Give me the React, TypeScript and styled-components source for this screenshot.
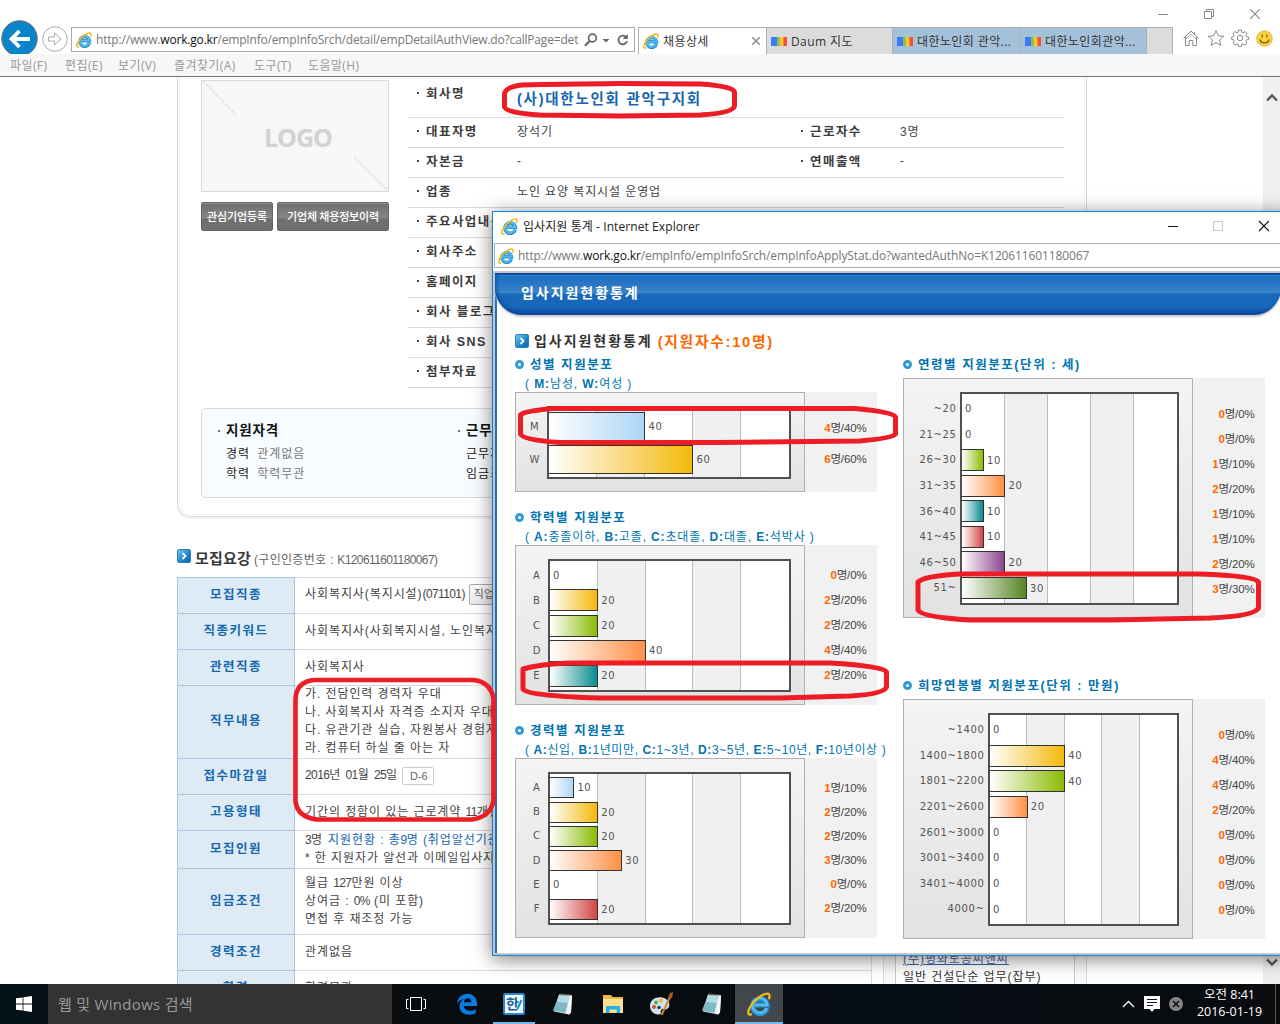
import React from "react";
import styled, { createGlobalStyle } from "styled-components";

const GlobalStyle = createGlobalStyle`
  * { box-sizing: border-box; }
  body { margin: 0; background: #fff; overflow: hidden; }
  svg { display: block; flex: none; }
`;

const PAGE_FONT = `"Liberation Sans", "Noto Sans CJK KR", sans-serif`;
const UI_FONT = `"Open Sans", "Noto Sans CJK KR", sans-serif`;
const CHART_FONT = `"DejaVu Sans", sans-serif`;

const Screen = styled.div`
  position: relative;
  width: 1280px;
  height: 1024px;
  overflow: hidden;
  display: flex;
  flex-direction: column;
  background: #fff;
  font-family: ${PAGE_FONT};
  white-space: nowrap;
`;

/* ---------- browser frame ---------- */
const TitleStrip = styled.div`
  height: 20px;
  display: flex;
  justify-content: flex-end;
  align-items: center;
  gap: 36px;
  padding: 8px 20px 0 0;
`;
const NavRow = styled.div`
  height: 34px;
  display: flex;
  align-items: flex-start;
  overflow: hidden;
`;
const NavButtons = styled.div`
  width: 71px;
  height: 34px;
  overflow: hidden;
`;
const AddressBox = styled.div`
  width: 564px;
  height: 25px;
  margin: 7px 3px 0 0;
  border: 1px solid #a9a9a9;
  display: flex;
  align-items: center;
  padding: 0 5px 0 4px;
`;
const Url = styled.div<{ $size: number; $ls: number }>`
  flex: 1;
  min-width: 0;
  margin-left: 4px;
  font: ${(p) => p.$size}px ${UI_FONT};
  letter-spacing: ${(p) => p.$ls}px;
  color: #777;
  b { font-weight: 400; color: #111; }
`;
const Tab = styled.div<{ $w: number; $bg: string; $last?: boolean }>`
  width: ${(p) => p.$w}px;
  height: 27px;
  margin-top: 7px;
  border: 1px solid #b0b0b0;
  border-right-width: ${(p) => (p.$last ? 1 : 0)}px;
  border-bottom-width: 0;
  background: ${(p) => p.$bg};
  display: flex;
  align-items: center;
  padding: 0 6px 0 4px;
  gap: 4px;
  font: 12px ${UI_FONT};
  letter-spacing: 0.4px;
  color: #333;
`;
const TabTitle = styled.span`
  flex: 1;
  letter-spacing: 0.4px;
`;
const BrowserTools = styled.div`
  display: flex;
  align-items: center;
  gap: 6.5px;
  padding: 9px 0 0 9px;
`;
const MenuBar = styled.div`
  height: 23px;
  background: #f7f7f7;
  border-bottom: 1px solid #747474;
  display: flex;
  align-items: center;
  padding-left: 10px;
  font: 12px ${UI_FONT};
  color: #999;
`;
const MenuItem = styled.span<{ $w: number }>`
  width: ${(p) => p.$w}px;
  letter-spacing: 0.4px;
`;

/* ---------- page ---------- */
const Viewport = styled.div`
  height: 907px;
  display: flex;
  overflow: hidden;
`;
const PageArea = styled.div`
  flex: 1;
  padding-left: 177px;
`;
const ScrollBar = styled.div`
  width: 17px;
  background: #f0f0f0;
  display: flex;
  flex-direction: column;
  justify-content: space-between;
  align-items: center;
  padding: 16px 0 17px;
`;
const CompanyCard = styled.section`
  width: 910px;
  height: 440px;
  border: 1px solid #dadada;
  border-top: 0;
  border-radius: 0 0 13px 13px;
  box-shadow: inset 0 0 0 1px #fff, inset 0 0 0 2px #f4f4f4, 0 2px 1px #f3f3f3;
  padding: 0 22px 0 23px;
`;
const CardTop = styled.div`
  display: flex;
  height: 331px;
`;
const LogoColumn = styled.div`
  width: 188px;
  padding-top: 3px;
  margin-right: 19px;
`;
const LogoBox = styled.div`
  position: relative;
  height: 112px;
  border: 1px solid #dadada;
  background: #f7f7f7;
  display: flex;
  align-items: center;
  justify-content: center;
  padding: 1px 0 0 6px;
  color: #d2d2d2;
  font: 700 25px "Open Sans", sans-serif;
  letter-spacing: -1px;
  svg { position: absolute; left: 0; top: 0; }
`;
const ButtonRow = styled.div`
  display: flex;
  justify-content: space-between;
  margin-top: 10px;
`;
const DarkButton = styled.div<{ $w: number }>`
  width: ${(p) => p.$w}px;
  height: 29px;
  border: 1px solid #656565;
  border-radius: 2px;
  background: linear-gradient(#6e6e6e, #868686 55%, #707070 58%, #707070);
  box-shadow: inset 0 1px 0 #909090;
  color: #fff;
  font: 500 11px/26px "Noto Sans CJK KR", sans-serif;
  letter-spacing: -0.15px;
  text-align: center;
`;
const InfoTable = styled.div`
  width: 656px;
`;
const InfoRow = styled.div<{ $h?: number }>`
  height: ${(p) => p.$h ?? 30}px;
  border-bottom: 1px solid #dadada;
  display: grid;
  grid-template-columns: 109px 283px 100px 1fr;
  align-items: center;
  padding-bottom: ${(p) => (p.$h ? 9 : 4)}px;
  color: #444;
  font-size: 12px;
  letter-spacing: 0.9px;
`;
const Label = styled.span<{ $inset?: number }>`
  display: flex;
  align-items: center;
  gap: 7px;
  padding-left: ${(p) => p.$inset ?? 9}px;
  font-weight: 700;
  font-size: 12.5px;
  letter-spacing: 1.45px;
  color: #3c3c3c;
  &::before { content: ""; width: 2px; height: 2px; background: #444; }
`;
const CompanyName = styled.span`
  font-weight: 700;
  font-size: 14.5px;
  letter-spacing: 1.75px;
  color: #1565b0;
  padding-top: 9px;
`;
const SummaryBox = styled.div`
  width: 863px;
  height: 90px;
  border: 1px solid #d9d9d9;
  border-radius: 5px;
  background: #f8fcff;
  display: flex;
  padding: 11px 0 0 16px;
`;
const SummaryCol = styled.div`
  width: 240px;
  font-size: 12px;
  line-height: 20px;
  letter-spacing: 0.96px;
  color: #777;
  p { margin: 0; padding-left: 8px; }
  b { font-weight: 400; color: #222; margin-right: 3px; }
`;
const SummaryTitle = styled.div`
  display: flex;
  align-items: center;
  gap: 6px;
  height: 22px;
  margin-bottom: 2px;
  color: #111;
  font-weight: 700;
  font-size: 13.5px;
  letter-spacing: 0.8px;
  &::before { content: ""; width: 2px; height: 2px; background: #777; }
`;
const SectionTitle = styled.div`
  display: flex;
  align-items: center;
  height: 24px;
  margin: 29px 0 7px;
  font-size: 12px;
  color: #666;
  letter-spacing: 0.3px;
  svg { margin-bottom: 4px; }
  h2 {
    margin: 0 3px 2px 4px;
    font-size: 15px;
    letter-spacing: 0.2px;
    color: #3a3a3a;
  }
`;
const Num = styled.span`
  letter-spacing: -0.6px;
`;
const Columns = styled.div`
  display: flex;
`;
const JobTable = styled.div`
  width: 695px;
  border-right: 1px solid #ddd;
`;
const JobRow = styled.div<{ $h: number }>`
  height: ${(p) => p.$h}px;
  display: flex;
`;
const JobHead = styled.div`
  width: 118px;
  background: #deeaf4;
  border: 1px solid #abc3e2;
  border-bottom: 0;
  display: flex;
  align-items: center;
  justify-content: center;
  padding-bottom: 5px;
  color: #1467b3;
  font-weight: 700;
  font-size: 12.5px;
  letter-spacing: 1.45px;
`;
const JobValue = styled.div`
  flex: 1;
  border-top: 1px solid #dadada;
  padding: 0 0 2px 10px;
  display: flex;
  flex-direction: column;
  justify-content: center;
  color: #444;
  font-size: 12px;
  line-height: 18px;
  letter-spacing: 0.92px;
  em { font-style: normal; color: #1467b3; margin-left: 5px; }
`;
const SmallTag = styled.span<{ $w: number }>`
  display: inline-block;
  vertical-align: middle;
  width: ${(p) => p.$w}px;
  height: ${(p) => (p.$w > 40 ? 21 : 18)}px;
  margin-left: 4px;
  border: 1px solid ${(p) => (p.$w > 40 ? "#aaa" : "#ccc")};
  border-radius: 2px;
  background: linear-gradient(#fff, ${(p) => (p.$w > 40 ? "#e9e9e9" : "#fff")});
  padding-left: ${(p) => (p.$w > 40 ? 4 : 7)}px;
  font-size: 11px;
  line-height: ${(p) => (p.$w > 40 ? 19 : 16)}px;
  letter-spacing: 0;
  color: #666;
`;
const SidePanel = styled.aside`
  width: 204px;
  height: 430px;
  margin-left: 11px;
  border: 1px solid #ddd;
  border-top: 0;
  background: #fafafa;
  padding: 0 11px;
`;
const SideList = styled.div`
  height: 430px;
  border: 1px solid #ccc;
  border-top: 0;
  background: #fff;
  display: flex;
  flex-direction: column;
  justify-content: flex-end;
  padding: 0 0 20px 7px;
  font-size: 12px;
  line-height: 18px;
  letter-spacing: 0.95px;
  color: #333;
  a { color: #3d5fa8; text-decoration: underline; }
`;

/* ---------- popup window ---------- */
const Popup = styled.div`
  position: absolute;
  left: 492px;
  top: 211px;
  width: 800px;
  height: 745px;
  border: 1px solid #1a80cf;
  background: #fff;
  box-shadow: 0 3px 18px rgba(0, 0, 0, 0.5);
  display: flex;
  flex-direction: column;
`;
const PopupTitle = styled.div`
  height: 31px;
  display: flex;
  align-items: center;
  padding: 0 22px 3px 8px;
  gap: 5px;
  font: 12px ${UI_FONT};
  letter-spacing: 0.08px;
  color: #222;
  span { flex: 1; }
`;
const PopupAddress = styled.div`
  height: 25px;
  margin-left: 1px;
  border: 1px solid #b0b0b0;
  display: flex;
  align-items: center;
  padding-left: 3px;
`;
const PopupBody = styled.div`
  flex: 1;
  margin-top: 3px;
  border: solid #c4c4c4;
  border-width: 2px 0 2px 2px;
`;
const PopupPage = styled.div`
  height: 100%;
  border-left: 2px solid #2070bc;
`;
const BannerBack = styled.div`
  height: 44px;
  margin-left: -2px;
`;
const Banner = styled.div`
  width: 786px;
  height: 42px;
  padding: 0 0 2px 26px;
  border-radius: 0 0 27px 27px;
  background: linear-gradient(#0a3f96 0, #0a3f96 1px, #2a78c4 2px, #1d6fc0 4px, #3a83ca 20px, #1868ba 21px, #1868ba 34px, #0d479f 42px);
  box-shadow: 0 2px 2px #ccc, inset 2px -2px 4px -1px #0d479f;
  color: #fff;
  font-weight: 700;
  font-size: 14px;
  line-height: 41px;
  letter-spacing: 1.95px;
`;
const StatHeading = styled.h1`
  display: flex;
  align-items: center;
  height: 28px;
  margin: 9px 0 0 18px;
  font-size: 14px;
  letter-spacing: 1.95px;
  color: #333;
  svg { margin: 2px 5px 0 0; }
  em { font-style: normal; color: #ff6600; margin-left: 5px; letter-spacing: 1.7px; font-size: 14.8px; }
`;
const ChartColumns = styled.div`
  display: flex;
  padding-left: 18px;
  gap: 26px;
`;
const ChartColumn = styled.div`
  width: 362px;
`;
const ChartSection = styled.section<{ $mb: number }>`
  margin-bottom: ${(p) => p.$mb}px;
`;
const ChartTitle = styled.h3`
  display: flex;
  align-items: center;
  gap: 6px;
  height: 19px;
  margin: 0;
  font-size: 12.5px;
  letter-spacing: 1.55px;
  color: #0073b0;
`;
const Bullet = styled.i`
  width: 9px;
  height: 9px;
  border: 3px solid #3399d2;
  border-radius: 50%;
  margin-top: 2px;
`;
const Legend = styled.div<{ $ls?: number }>`
  height: 19px;
  padding-left: 10px;
  color: #0073b0;
  font-size: 12px;
  line-height: 22px;
  letter-spacing: ${(p) => p.$ls ?? 0.6}px;
`;
const ChartFrame = styled.div<{ $h: number }>`
  height: ${(p) => p.$h}px;
  margin-top: ${(p) => (p.$h === 240 ? 5 : 0)}px;
  display: flex;
  background: #f1f1f1;
`;
const Graph = styled.div`
  width: 290px;
  border: 1px solid #b0b0b0;
  background: linear-gradient(#f4f4f4, #e2e2e2);
  display: flex;
  justify-content: flex-end;
  padding: 13px 13px 12px 0;
  font: 10px ${CHART_FONT};
  letter-spacing: 0.62px;
  color: #555;
`;
const AxisLabels = styled.div<{ $wide?: boolean }>`
  display: flex;
  flex-direction: column;
  justify-content: center;
  text-align: ${(p) => (p.$wide ? "right" : "center")};
  padding: 0 ${(p) => (p.$wide ? 3.5 : 7)}px 0 0;
`;
const AxisLabel = styled.span<{ $h: number }>`
  height: ${(p) => p.$h}px;
  line-height: ${(p) => p.$h}px;
`;
const Plot = styled.div<{ $w: number }>`
  width: ${(p) => p.$w}px;
  border: 2px solid #505050;
  display: flex;
  flex-direction: column;
  justify-content: center;
  background: linear-gradient(90deg,
    #fff calc(20% - 1px), #bbb calc(20% - 1px), #bbb 20%,
    #f0f0f0 20%, #f0f0f0 calc(40% - 1px), #bbb calc(40% - 1px), #bbb 40%,
    #fff 40%, #fff calc(60% - 1px), #bbb calc(60% - 1px), #bbb 60%,
    #f0f0f0 60%, #f0f0f0 calc(80% - 1px), #bbb calc(80% - 1px), #bbb 80%, #fff 80%);
`;
const BarRow = styled.div<{ $h: number }>`
  height: ${(p) => p.$h}px;
  display: flex;
  align-items: center;
  gap: 3px;
`;
const Bar = styled.div<{ $h: number; $c: string }>`
  height: ${(p) => p.$h}px;
  border: 1px solid #333;
  border-left: 0;
  background: linear-gradient(90deg, #fff, ${(p) => p.$c});
`;
const Results = styled.div<{ $shift: number }>`
  flex: 1;
  display: flex;
  flex-direction: column;
  justify-content: center;
  align-items: flex-end;
  padding: ${(p) => p.$shift * 2}px 10.5px 0 0;
`;
const Result = styled.span<{ $h: number }>`
  height: ${(p) => p.$h}px;
  line-height: ${(p) => p.$h}px;
  font-size: 11.5px;
  letter-spacing: -0.15px;
  color: #444;
  b { color: #ff6600; }
`;

/* ---------- taskbar ---------- */
const TaskBar = styled.footer`
  height: 40px;
  background: linear-gradient(90deg, #04131b, #090d10 8%, #080c0f 50%, #050c14 70%, #0a0c0e);
  display: flex;
  color: #fff;
  font-family: ${UI_FONT};
`;
const StartButton = styled.div`
  width: 48px;
  display: flex;
  align-items: center;
  justify-content: center;
`;
const SearchBox = styled.div`
  width: 344px;
  background: #333;
  color: #999;
  padding-left: 10px;
  font-size: 15px;
  letter-spacing: 0.3px;
  line-height: 40px;
`;
const TaskItem = styled.div<{ $w?: number; $open?: boolean; $active?: boolean }>`
  width: ${(p) => p.$w ?? 49}px;
  display: flex;
  align-items: center;
  justify-content: center;
  background: ${(p) => (p.$active ? "#42474b" : "transparent")};
  box-shadow: ${(p) => (p.$open || p.$active ? "inset 0 -2px 0 #76b9ed" : "none")};
`;
const Tray = styled.div`
  flex: 1;
  display: flex;
  justify-content: flex-end;
  align-items: center;
  gap: 9px;
`;
const Clock = styled.div`
  width: 80px;
  font-size: 12.5px;
  line-height: 17px;
  letter-spacing: 0;
  text-align: center;
  padding: 0 5px 2px 0;
`;
const DesktopEdge = styled.div`
  width: 5px;
  height: 40px;
  border-left: 1px solid #555;
  margin-left: -6px;
`;
const Marks = styled.svg`
  position: absolute;
  left: 0;
  top: 0;
  pointer-events: none;
`;

/* ---------- icons ---------- */
const IeIcon = ({ size = 16 }: { size?: number }) => (
  <svg width={size} height={size} viewBox="0 0 16 16" fill="none">
    <path d="M13.400 10.800A4.900 4.900 0 1 1 13.500 8.700H4.600" stroke="#2a8fd0" strokeWidth="3.400" />
    <path d="M13.200 10.700A4.900 4.900 0 1 1 13.500 8.700H5" stroke="#55bdf0" strokeWidth="1.700" />
    <path d="M3.200 14.700C.8 16 .1 13.800 1.700 10.700 4 6.100 10.200 1 13.600 1 15.300 1 15.300 3 14.500 4.800" stroke="#f2b816" strokeWidth="1.500" />
  </svg>
);
const DaumIcon = () => (
  <svg width="16" height="9" viewBox="0 0 16 9">
    <rect width="6.300" height="9" fill="#3a7cf5" />
    <rect x="6.300" width="2.500" height="9" fill="#7cc243" />
    <rect x="8.800" width="3.600" height="9" fill="#ffc81c" />
    <rect x="12.400" width="3.600" height="9" fill="#f5503c" />
  </svg>
);
const ArrowBadge = () => (
  <svg width="14" height="14" viewBox="0 0 14 14">
    <defs>
      <linearGradient id="badge" x1="0" y1="0" x2="1" y2="1">
        <stop offset="0" stopColor="#7cc8ee" />
        <stop offset="0.6" stopColor="#1a86c8" />
        <stop offset="1" stopColor="#0c62a6" />
      </linearGradient>
    </defs>
    <rect x=".5" y=".5" width="13" height="13" rx="1.500" fill="url(#badge)" stroke="#2a83bd" />
    <path d="M5.500 4l3 3-3 3" stroke="#fff" strokeWidth="1.800" fill="none" />
  </svg>
);
const BackForward = () => (
  <svg width="71" height="36" viewBox="0 0 71 36" fill="none">
    <circle cx="19.500" cy="18.500" r="17.800" fill="#0a84c8" stroke="#777" />
    <path d="M30 19H12M19.500 11l-8 8 8 8" stroke="#fff" strokeWidth="3.800" />
    <circle cx="55" cy="19" r="12.300" stroke="#aaa" fill="#fff" />
    <path d="M48.500 17h6v-4l6.500 6-6.500 6v-4h-6z" stroke="#aaa" />
  </svg>
);
const AddressTools = () => (
  <svg width="46" height="16" viewBox="0 0 46 16" fill="none" stroke="#666">
    <circle cx="9.500" cy="6" r="3.900" strokeWidth="1.700" />
    <path d="M6.500 9L2 13.800" strokeWidth="2.300" />
    <path d="M19.500 7h7L23 10.500z" fill="#666" stroke="none" />
    <path d="M43.300 5.500A4.300 4.300 0 1 0 44 9" strokeWidth="1.800" />
    <path d="M44.800 2v5h-5z" fill="#666" stroke="none" />
  </svg>
);
const MinimizeIcon = ({ color }: { color: string }) => (
  <svg width="10" height="10"><path d="M0 5.500h10" stroke={color} /></svg>
);
const RestoreIcon = () => (
  <svg width="10" height="10" fill="none" stroke="#888">
    <path d="M.5 2.500h7v7h-7zM2.500 2.500v-2h7v7h-2" />
  </svg>
);
const CloseIcon = ({ color, size = 10, weight = 1.1 }: { color: string; size?: number; weight?: number }) => (
  <svg width={size} height={size} viewBox="0 0 10 10"><path d="M0 0l10 10M10 0L0 10" stroke={color} strokeWidth={weight} /></svg>
);
const HomeIcon = () => (
  <svg width="18" height="18" viewBox="0 0 18 18" fill="none" stroke="#8a8a8a">
    <path d="M1.500 9.500L9 2l7.500 7.500M3.500 8v8.500h3.700v-5h3.600v5h3.700V8M12.500 3v2.300" />
    <path d="M3 11L9 5l6 6" strokeWidth=".7" />
  </svg>
);
const StarIcon = () => (
  <svg width="18" height="18" viewBox="0 0 18 18" fill="none" stroke="#8a8a8a">
    <path d="M9 1.500l2.200 5.300 5.700.4-4.400 3.700 1.400 5.600L9 13.500l-4.900 3 1.400-5.600L1.100 7.200l5.700-.4z" />
  </svg>
);
const GearIcon = () => (
  <svg width="18" height="18" viewBox="0 0 18 18" fill="none" stroke="#8a8a8a">
    <circle cx="9" cy="9" r="2.700" />
    <path d="M7.600 1h2.800l.4 2.200 1.300.6 1.900-1.300 2 2-1.300 1.800.6 1.400 2.200.4v2.400l-2.200.4-.6 1.400 1.300 1.900-2 1.900-1.900-1.200-1.300.5-.4 2.300H7.600l-.4-2.300-1.300-.5L4 16.100l-2-1.900 1.300-1.900-.6-1.400L.7 10.500V8.100l2-.4.6-1.400L2 4.500l2-2 1.900 1.300 1.300-.6z" />
  </svg>
);
const SmileIcon = () => (
  <svg width="17" height="17" viewBox="0 0 17 17">
    <circle cx="8.500" cy="8.500" r="7.800" fill="#fbd33c" stroke="#d8b048" strokeWidth=".8" />
    <path d="M6.200 4.500v3M10.800 4.500v3M3.800 9.500c1.500 4.600 7.900 4.600 9.400 0" stroke="#7a5a10" strokeWidth="1.200" fill="none" />
  </svg>
);
const Chevron = ({ up, color = "#555" }: { up?: boolean; color?: string }) => (
  <svg width="12" height="9" viewBox="0 0 12 9" fill="none" stroke={color} strokeWidth="2.300">
    <path d={up ? "M1 7.500l5-5 5 5" : "M1 1.500l5 5 5-5"} />
  </svg>
);
const WindowsLogo = () => (
  <svg width="16" height="16" viewBox="0 0 16 16" fill="#fff">
    <path d="M0 2.300L6.600 1.400V7.600H0zM7.400 1.300L16 0v7.600H7.400zM0 8.400h6.600v6.200L0 13.700zM7.400 8.400H16V16l-8.600-1.300z" />
  </svg>
);
const TaskViewIcon = () => (
  <svg width="20" height="16" viewBox="0 0 20 16" fill="none" stroke="#fff">
    <path d="M4.500 1.500h11v13h-11zM2.500 3.500h-2v9h2M17.500 3.500h2v9h-2" />
  </svg>
);
const EdgeIcon = () => (
  <svg width="22" height="22" viewBox="0 0 22 22">
    <path d="M1 10.500C2 3.500 7 .8 11.500.8 17.500.8 21 5.500 21 10.800V13H7.700c.3 4.500 7 6.500 12 3.300v4C13 23.500 3.500 21.500 3.500 13.300c0-3.300 1.700-6 4.500-7.600-3 .8-5.300 2.600-7 4.800zM7.800 9.200h7.500c0-5.200-6.800-5-7.500 0z" fill="#0a7be0" />
  </svg>
);
const HangulIcon = () => (
  <svg width="22" height="22" viewBox="0 0 22 22">
    <rect x="1" y="1" width="20" height="20" rx="1.500" fill="#f2faff" stroke="#2489cf" strokeWidth="2" />
    <text x="9.500" y="16" textAnchor="middle" fontSize="14" fontWeight="700" fill="#17639f" fontFamily="Noto Sans CJK KR, sans-serif">한</text>
    <path d="M18.500 7l-4 9" stroke="#2489cf" strokeWidth="2" />
  </svg>
);
const NotepadIcon = () => (
  <svg width="24" height="24" viewBox="0 0 24 24">
    <path d="M8 2.500l13 1-1 17-2 2L3 19.500z" fill="#d9e2e4" />
    <path d="M8 3l11 .5-4.500 17.500L2 18.500z" fill="#7fb9c6" />
    <path d="M8 3l11 .5-2 7.500-11-1z" fill="#b4dbe3" />
    <path d="M19 3.500L14.500 21l3.500 1.500 2-2 1-17z" fill="#f2f5f5" />
    <path d="M8.500 2.500l10.500.7" stroke="#8b8b8b" strokeDasharray="1 1" strokeWidth="2" />
  </svg>
);
const FolderIcon = () => (
  <svg width="22" height="20" viewBox="0 0 22 20">
    <path d="M1 1h8l1.500 2H21v16H1z" fill="#e8b84a" />
    <path d="M1 5h20v14H1z" fill="#fde08b" />
    <path d="M4 12h14v7h-3.500v-3.500h-7V19H4z" fill="#22b2e8" />
  </svg>
);
const PaintIcon = () => (
  <svg width="26" height="26" viewBox="0 0 26 26">
    <path d="M2 15C2 9 8 5.500 14 6.500s9 6 6.500 10-5-.5-7 2 1 4.500-2.500 5C6 24 2 20 2 15z" fill="#cfe3f0" />
    <circle cx="6" cy="16" r="1.900" fill="#e0412c" /><circle cx="8" cy="11.500" r="1.900" fill="#52ab3e" />
    <circle cx="13" cy="9.500" r="1.900" fill="#f0b020" /><circle cx="11" cy="16.500" r="1.700" fill="#1c3950" />
    <path d="M13.500 24L22 6" stroke="#d9822d" strokeWidth="2" />
    <path d="M20 6.500L22 2l3-1-.5 4.500-2 2.500z" fill="#a35d2b" />
  </svg>
);

/* ---------- charts ---------- */
type Datum = [label: string, percent: number, color?: string];
interface ChartProps {
  title: string;
  legend?: React.ReactNode;
  legendLs?: number;
  data: Datum[];
  height: number;
  plotWidth: number;
  step: number;
  barHeight: number;
  resultStep: number;
  resultShift?: number;
  gap?: number;
}
const Chart = (p: ChartProps) => {
  const wide = p.data[0][0].length > 1;
  return (
    <ChartSection $mb={p.gap ?? 0}>
      <ChartTitle><Bullet />{p.title}</ChartTitle>
      {p.legend && <Legend $ls={p.legendLs}>{p.legend}</Legend>}
      <ChartFrame $h={p.height}>
        <Graph>
          <AxisLabels $wide={wide}>
            {p.data.map(([l]) => <AxisLabel key={l} $h={p.step}>{l}</AxisLabel>)}
          </AxisLabels>
          <Plot $w={p.plotWidth}>
            {p.data.map(([l, v, c]) => (
              <BarRow key={l} $h={p.step}>
                {v > 0 ? <Bar $h={p.barHeight} $c={c ?? "#fff"} style={{ width: `${v + 0.2}%` }} /> : <span />}
                {v}
              </BarRow>
            ))}
          </Plot>
        </Graph>
        <Results $shift={p.resultShift ?? 0}>
          {p.data.map(([l, v]) => (
            <Result key={l} $h={p.resultStep}><b>{v / 10}</b>명/{v}%</Result>
          ))}
        </Results>
      </ChartFrame>
    </ChartSection>
  );
};

const BLUE = "#abd5f7", YELLOW = "#f4b90c", GREEN = "#8aba05", ORANGE = "#ff8f46", TEAL = "#078d8c", RED = "#d24545", PURPLE = "#8c468f", OLIVE = "#568424";

const INFO: [string, string, string?, string?][] = [
  ["대표자명", "장석기", "근로자수", "3명"],
  ["자본금", "-", "연매출액", "-"],
  ["업종", "노인 요양 복지시설 운영업"],
  ["주요사업내용", ""],
  ["회사주소", ""],
  ["홈페이지", ""],
  ["회사 블로그", ""],
  ["회사 SNS", ""],
  ["첨부자료", ""],
];

const JOBS: [string, number, React.ReactNode][] = [
  ["모집직종", 36, <div>사회복지사(복지시설)<Num>(071101)</Num><SmallTag $w={80}>직업정보</SmallTag></div>],
  ["직종키워드", 36, <div>사회복지사(사회복지시설, 노인복지시설)</div>],
  ["관련직종", 36, <div>사회복지사</div>],
  ["직무내용", 73, <><div>가. 전담인력 경력자 우대</div><div>나. 사회복지사 자격증 소지자 우대</div><div>다. 유관기관 실습, 자원봉사 경험자</div><div>라. 컴퓨터 하실 줄 아는 자</div></>],
  ["접수마감일", 36, <div><Num>2016</Num>년 <Num>01</Num>월 <Num>25</Num>일<SmallTag $w={32}>D-6</SmallTag></div>],
  ["고용형태", 36, <div>기간의 정함이 있는 근로계약 <Num>11</Num>개월</div>],
  ["모집인원", 38, <><div><Num>3</Num>명<em>지원현황 : 총<Num>9</Num>명 (취업알선기관</em></div><div>* 한 지원자가 알선과 이메일입사지원</div></>],
  ["임금조건", 66, <><div>월급 <Num>127</Num>만원 이상</div><div>상여금 : <Num>0%</Num> (미 포함)</div><div>면접 후 재조정 가능</div></>],
  ["경력조건", 36, <div>관계없음</div>],
  ["학력", 36, <div>학력무관</div>],
];

export default function App() {
  return (
    <Screen>
      <GlobalStyle />
      <TitleStrip>
        <MinimizeIcon color="#888" /><RestoreIcon /><CloseIcon color="#888" />
      </TitleStrip>
      <NavRow>
        <NavButtons><BackForward /></NavButtons>
        <AddressBox>
          <IeIcon />
          <Url $size={12} $ls={-0.18}>http://www.<b>work.go.kr</b>/empInfo/empInfoSrch/detail/empDetailAuthView.do?callPage=det</Url>
          <AddressTools />
        </AddressBox>
        <Tab $w={128} $bg="#fff"><IeIcon /><TabTitle>채용상세</TabTitle><CloseIcon color="#999" size={8} weight={2.2} /></Tab>
        <Tab $w={126} $bg="#dcdcdc"><DaumIcon /><TabTitle>Daum 지도</TabTitle></Tab>
        <Tab $w={128} $bg="#a5c1da"><DaumIcon /><TabTitle>대한노인회 관악...</TabTitle></Tab>
        <Tab $w={126} $bg="#a5c1da"><DaumIcon /><TabTitle>대한노인회관악...</TabTitle></Tab>
        <Tab $w={27} $bg="#dcdcdc" $last />
        <BrowserTools><HomeIcon /><StarIcon /><GearIcon /><SmileIcon /></BrowserTools>
      </NavRow>
      <MenuBar>
        <MenuItem $w={55}>파일(F)</MenuItem><MenuItem $w={53}>편집(E)</MenuItem><MenuItem $w={56}>보기(V)</MenuItem>
        <MenuItem $w={80}>즐겨찾기(A)</MenuItem><MenuItem $w={54}>도구(T)</MenuItem><MenuItem $w={60}>도움말(H)</MenuItem>
      </MenuBar>

      <Viewport>
        <PageArea>
          <CompanyCard>
            <CardTop>
              <LogoColumn>
                <LogoBox>
                  <svg width="186" height="110" stroke="#bbb" strokeDasharray="1 1"><path d="M1 0l33 34M152 76l34 34" /></svg>
                  LOGO
                </LogoBox>
                <ButtonRow>
                  <DarkButton $w={72}>관심기업등록</DarkButton>
                  <DarkButton $w={112}>기업체 채용정보이력</DarkButton>
                </ButtonRow>
              </LogoColumn>
              <InfoTable>
                <InfoRow $h={41}><Label>회사명</Label><CompanyName>(사)대한노인회 관악구지회</CompanyName></InfoRow>
                {INFO.map(([a, b, c, d]) => (
                  <InfoRow key={a}>
                    <Label>{a}</Label><span>{b}</span>
                    {c && <Label $inset={1}>{c}</Label>}{d && <span>{d}</span>}
                  </InfoRow>
                ))}
              </InfoTable>
            </CardTop>
            <SummaryBox>
              <SummaryCol>
                <SummaryTitle>지원자격</SummaryTitle>
                <p><b>경력</b> 관계없음</p><p><b>학력</b> 학력무관</p>
              </SummaryCol>
              <SummaryCol>
                <SummaryTitle>근무조건</SummaryTitle>
                <p><b>근무지역</b></p><p><b>임금조건</b></p>
              </SummaryCol>
            </SummaryBox>
          </CompanyCard>
          <SectionTitle><ArrowBadge /><h2>모집요강</h2><span>(구인인증번호 : <Num>K120611601180067)</Num></span></SectionTitle>
          <Columns>
            <JobTable>
              {JOBS.map(([head, h, body]) => (
                <JobRow key={head} $h={h}><JobHead>{head}</JobHead><JobValue>{body}</JobValue></JobRow>
              ))}
            </JobTable>
            <SidePanel>
              <SideList><a>(주)평화로공씨앤씨</a><span>일반 건설단순 업무(잡부)</span></SideList>
            </SidePanel>
          </Columns>
        </PageArea>
        <ScrollBar><Chevron up /><Chevron /></ScrollBar>
      </Viewport>

      <TaskBar>
        <StartButton><WindowsLogo /></StartButton>
        <SearchBox>웹 및 Windows 검색</SearchBox>
        <TaskItem $w={48}><TaskViewIcon /></TaskItem>
        <TaskItem $w={53}><EdgeIcon /></TaskItem>
        <TaskItem $w={42} $open><HangulIcon /></TaskItem>
        <TaskItem $w={56}><NotepadIcon /></TaskItem>
        <TaskItem $w={43}><FolderIcon /></TaskItem>
        <TaskItem $w={54}><PaintIcon /></TaskItem>
        <TaskItem $w={47}><NotepadIcon /></TaskItem>
        <TaskItem $w={48} $active><IeIcon size={24} /></TaskItem>
        <Tray>
          <svg width="13" height="8" fill="none" stroke="#fff" strokeWidth="1.300"><path d="M1 7l5.500-5.500L12 7" /></svg>
          <svg width="16" height="16" viewBox="0 0 16 16"><path d="M0 0h16v13h-5.500L8 16l-2.500-3H0z" fill="#fff" /><path d="M3 3.500h10M3 6.500h10M3 9.500h6" stroke="#111" /></svg>
          <svg width="14" height="14"><circle cx="7" cy="7" r="7" fill="#858585" /><path d="M4 4l6 6M10 4l-6 6" stroke="#111" strokeWidth="1.700" /></svg>
          <Clock>오전 8:41<br />2016-01-19</Clock>
          <DesktopEdge />
        </Tray>
      </TaskBar>

      <Popup>
        <PopupTitle>
          <IeIcon size={17} /><span>입사지원 통계 - Internet Explorer</span>
          <svg width="102" height="12" fill="none">
            <path d="M1 6.500h10" stroke="#111" /><path d="M46.500 1.500h9v9h-9z" stroke="#c8c8c8" /><path d="M92 1l10 10M102 1L92 11" stroke="#111" strokeWidth="1.200" />
          </svg>
        </PopupTitle>
        <PopupAddress>
          <IeIcon />
          <Url $size={12} $ls={-0.12}>http://www.<b>work.go.kr</b>/empInfo/empInfoSrch/empInfoApplyStat.do?wantedAuthNo=K120611601180067</Url>
        </PopupAddress>
        <PopupBody>
          <PopupPage>
            <BannerBack><Banner>입사지원현황통계</Banner></BannerBack>
            <StatHeading><ArrowBadge />입사지원현황통계<em>(지원자수:10명)</em></StatHeading>
            <ChartColumns>
              <ChartColumn>
                <Chart title="성별 지원분포" legendLs={0.9} legend={<>( <b>M:</b>남성, <b>W:</b>여성 )</>} height={100} plotWidth={244} step={33} barHeight={29} resultStep={31} resultShift={2} gap={15}
                  data={[["M", 40, BLUE], ["W", 60, YELLOW]]} />
                <Chart title="학력별 지원분포" legendLs={0.86} legend={<>( <b>A:</b>중졸이하, <b>B:</b>고졸, <b>C:</b>초대졸, <b>D:</b>대졸, <b>E:</b>석박사 )</>} height={160} plotWidth={243} step={25.2} barHeight={22} resultStep={25} gap={15}
                  data={[["A", 0], ["B", 20, YELLOW], ["C", 20, GREEN], ["D", 40, ORANGE], ["E", 20, TEAL]]} />
                <Chart title="경력별 지원분포" legend={<>( <b>A:</b>신입, <b>B:</b>1년미만, <b>C:</b>1~3년, <b>D:</b>3~5년, <b>E:</b>5~10년, <b>F:</b>10년이상 )</>} height={180} plotWidth={243} step={24.3} barHeight={21} resultStep={24}
                  data={[["A", 10, BLUE], ["B", 20, YELLOW], ["C", 20, GREEN], ["D", 30, ORANGE], ["E", 0], ["F", 20, RED]]} />
              </ChartColumn>
              <ChartColumn>
                <Chart title="연령별 지원분포(단위 : 세)" height={240} plotWidth={219} step={25.6} barHeight={22} resultStep={25} resultShift={4} gap={57}
                  data={[["~20", 0], ["21~25", 0], ["26~30", 10, GREEN], ["31~35", 20, ORANGE], ["36~40", 10, TEAL], ["41~45", 10, RED], ["46~50", 20, PURPLE], ["51~", 30, OLIVE]]} />
                <Chart title="희망연봉별 지원분포(단위 : 만원)" height={240} plotWidth={191} step={25.6} barHeight={22} resultStep={25} resultShift={4}
                  data={[["~1400", 0], ["1400~1800", 40, YELLOW], ["1801~2200", 40, GREEN], ["2201~2600", 20, ORANGE], ["2601~3000", 0], ["3001~3400", 0], ["3401~4000", 0], ["4000~", 0]]} />
              </ChartColumn>
            </ChartColumns>
          </PopupPage>
        </PopupBody>
      </Popup>

      <Marks width="1280" height="1024" fill="none" stroke="#ee1c24" strokeWidth="5" strokeLinejoin="round">
        <path d="M504.500 94Q505 87 522 85Q560 84 620 83.500L700 84Q733 86 734.500 92V106Q733 113 700 115L620 116L540 115Q506 113 504.500 107Z" />
        <path d="M520.500 415Q524 411 553 408.500H855Q894 412 895.500 417V434Q893 438 860 441L720 442.500H560Q522 440 520.500 434Z" />
        <path d="M523 669Q540 664 570 663H830Q884 666 886.500 672V687Q884 694 850 696L780 698H600Q526 696 523 689Z" />
        <path d="M918 582Q924 576 960 574H1200Q1255 576 1258.500 582V608Q1255 616 1210 618L1110 620H970Q921 617 918 610Z" />
        <path d="M295.500 700Q296 681 315 680H474Q490 682 493.500 698V800Q491 817 472 819.500H317Q297 817 295.500 801Z" strokeWidth="4.600" />
      </Marks>
    </Screen>
  );
}
